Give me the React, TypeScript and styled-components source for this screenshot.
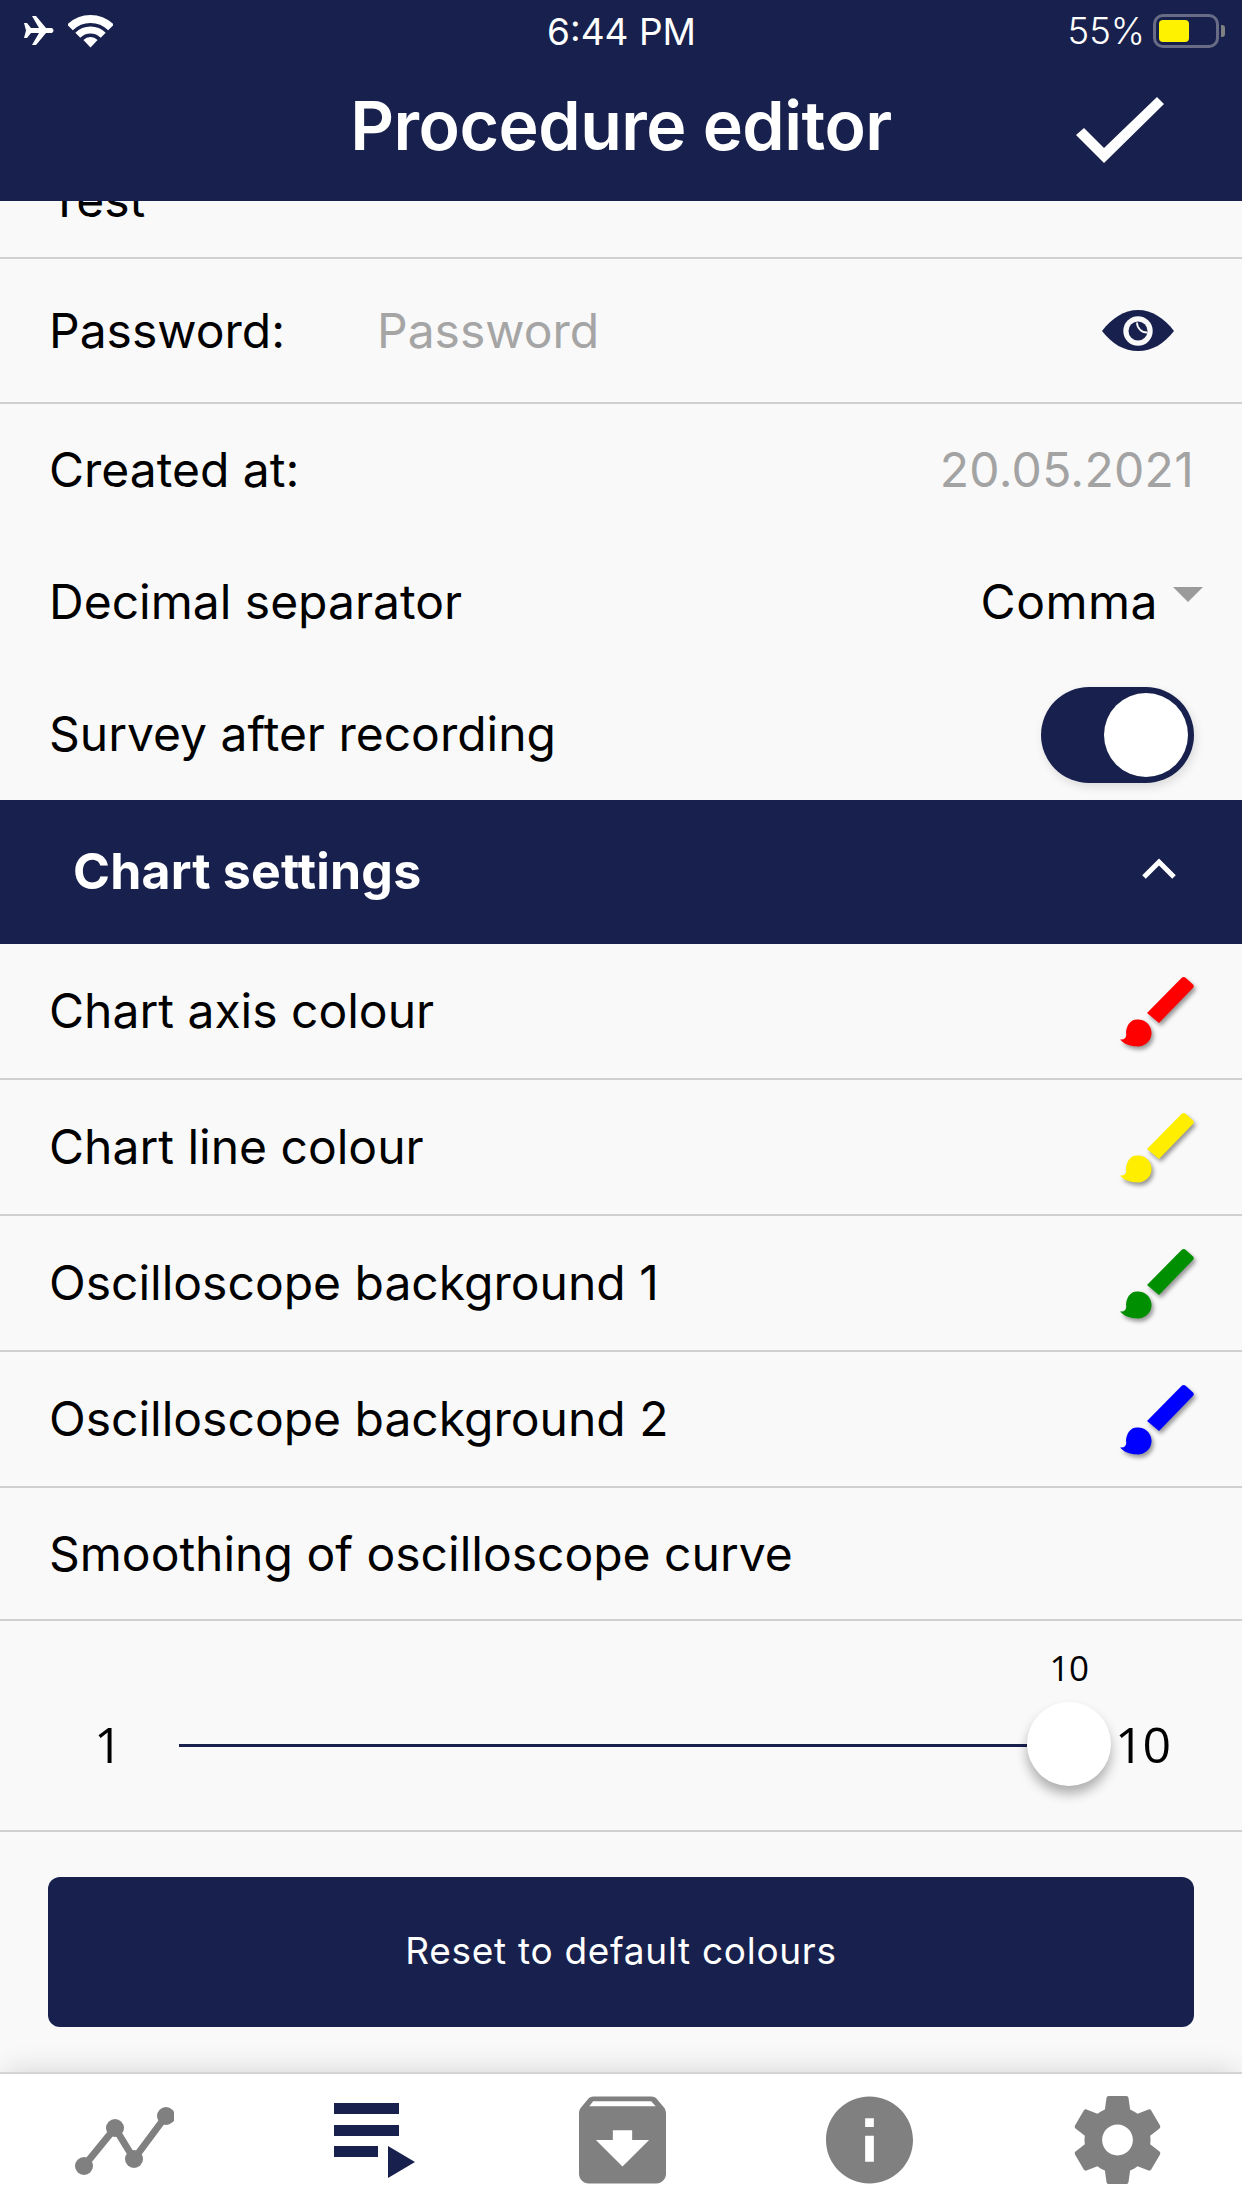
import React from "react";
import styled, { createGlobalStyle } from "styled-components";

const NAVY = "#18214d";
const GRAY = "#808080";

const Global = createGlobalStyle`
  html, body { margin: 0; padding: 0; background: #f9f9f9; }
  * { box-sizing: border-box; }
`;

const Page = styled.div`
  width: 1242px;
  height: 2208px;
  display: flex;
  flex-direction: column;
  overflow: hidden;
  background: #f9f9f9;
  color: #000;
  font-family: Inter, "Liberation Sans", sans-serif;
  font-size: 48px;
`;

const Header = styled.header`
  height: 201px;
  flex: none;
  background: ${NAVY};
  color: #fff;
  display: flex;
  flex-direction: column;
`;

const StatusBar = styled.div`
  height: 62px;
  display: grid;
  grid-template-columns: 1fr auto 1fr;
  align-items: center;
  padding: 0 23px 0 24px;
  font-size: 37px;
`;

const StatusLeft = styled.div`
  display: flex;
  align-items: center;
  gap: 13px;
`;

const StatusRight = styled.div`
  display: flex;
  align-items: center;
  justify-content: flex-end;
  gap: 8px;
  font-weight: 300;
  font-size: 36.5px;
`;

const Battery = styled.div`
  width: 66px;
  height: 34px;
  border: 3px solid #686c86;
  border-radius: 10px;
  padding: 3px;
  position: relative;
  &::after {
    content: "";
    position: absolute;
    right: -9px;
    top: 8px;
    width: 4px;
    height: 12px;
    background: #808080;
    border-radius: 0 3px 3px 0;
  }
`;

const BatteryLevel = styled.div`
  width: 30px;
  height: 22px;
  background: #fff200;
  border-radius: 4px;
`;

const TitleBar = styled.div`
  flex: 1;
  display: grid;
  grid-template-columns: 1fr auto 1fr;
  align-items: center;
  padding: 0 78px 14px 0;
`;

const Title = styled.h1`
  margin: 0 -78px 0 0;
  grid-column: 2;
  font-size: 68px;
  font-weight: 600;
  letter-spacing: -0.5px;
`;

const Done = styled.div`
  grid-column: 3;
  justify-self: end;
  display: flex;
  margin-top: 11px;
`;

const Row = styled.div<{ $h: number; $line?: boolean }>`
  height: ${(p) => p.$h}px;
  flex: none;
  display: flex;
  align-items: center;
  justify-content: space-between;
  padding: 0 48px 0 49px;
  border-bottom: ${(p) => (p.$line ? "2px solid #d0d0d0" : "none")};
`;

const ClippedRow = styled(Row)`
  overflow: hidden;
  align-items: flex-start;
`;

const ClippedText = styled.span`
  margin-top: -30px;
  line-height: 58px;
`;

const Label = styled.span<{ $lift?: number }>`
  white-space: nowrap;
  margin-bottom: ${(p) => p.$lift ?? 2}px;
`;

const Placeholder = styled.span`
  color: #a5a5a5;
  margin-left: 92px;
  flex: 1;
`;

const EyeSlot = styled.div`
  display: flex;
  margin-right: 20px;
`;

const MutedValue = styled.span`
  color: #a3a3a3;
  letter-spacing: 0.3px;
  margin-bottom: 2px;
`;

const SelectValue = styled.div`
  display: flex;
  align-items: center;
  gap: 15px;
  margin: 0 -9px 2px 0;
  letter-spacing: 0.5px;
`;

const Caret = styled.span`
  width: 0;
  height: 0;
  border-left: 15px solid transparent;
  border-right: 15px solid transparent;
  border-top: 15px solid #9b9b9b;
  margin-bottom: 14px;
`;

const Toggle = styled.div`
  width: 153px;
  height: 96px;
  margin-top: 2px;
  border-radius: 48px;
  background: ${NAVY};
  display: flex;
  align-items: center;
  justify-content: flex-end;
  padding-right: 6px;
  box-shadow: 2px 4px 10px rgba(0, 0, 0, 0.12);
`;

const ToggleKnob = styled.div`
  width: 84px;
  height: 84px;
  border-radius: 50%;
  background: #fff;
`;

const SectionHeader = styled.div`
  height: 144px;
  flex: none;
  background: ${NAVY};
  color: #fff;
  display: flex;
  align-items: center;
  justify-content: space-between;
  padding: 0 66px 2px 73px;
  font-size: 50px;
  font-weight: 700;
  letter-spacing: 0.2px;
`;

const ChevronSlot = styled.div`
  display: flex;
  margin-bottom: 6px;
`;

const Brush = styled.svg`
  filter: drop-shadow(2px 3px 2px rgba(0, 0, 0, 0.4));
  overflow: visible;
`;

const SliderRow = styled.div`
  height: 211px;
  flex: none;
  border-bottom: 2px solid #d0d0d0;
  display: flex;
  align-items: center;
  padding: 36px 0 0 94px;
  font-family: "Open Sans", sans-serif;
  font-size: 50px;
  letter-spacing: -1px;
`;

const SliderEnd = styled.span`
  width: 26px;
`;

const Track = styled.div`
  width: 848px;
  height: 3px;
  margin: 3px 0 0 59px;
  background: ${NAVY};
`;

const Thumb = styled.div`
  width: 84px;
  height: 84px;
  flex: none;
  border-radius: 50%;
  background: #fff;
  box-shadow: 0 8px 12px rgba(0, 0, 0, 0.3);
  position: relative;
  margin-right: 4px;
`;

const ThumbValue = styled.span`
  position: absolute;
  left: 0;
  right: 0;
  top: -58px;
  text-align: center;
  font-size: 35px;
  letter-spacing: -0.5px;
`;

const Footer = styled.div`
  flex: 1;
  padding: 45px 48px 0;
`;

const ResetButton = styled.div`
  height: 150px;
  border-radius: 12px;
  background: ${NAVY};
  color: #fff;
  font-size: 37px;
  letter-spacing: 0.7px;
  display: flex;
  align-items: center;
  justify-content: center;
  padding-bottom: 4px;
`;

const TabBar = styled.nav`
  height: 136px;
  flex: none;
  background: #fff;
  border-top: 2px solid #d4d4d4;
  display: grid;
  grid-template-columns: repeat(5, 1fr);
  box-shadow: 0 -8px 26px -6px rgba(0, 0, 0, 0.14);
  position: relative;
`;

const Tab = styled.div<{ $nudge?: number }>`
  display: flex;
  justify-content: center;
  align-items: flex-start;
  padding-top: 22px;
  padding-left: ${(p) => p.$nudge ?? 0}px;
`;

const BrushIcon = ({ color }: { color: string }) => (
  <Brush width="74" height="70" viewBox="0 0 74 70">
    <g fill={color}>
      <path d="M62 1.5a3 3 0 0 1 3.6.2l7.2 6.6a2.6 2.6 0 0 1 .1 3.6L39 47 27 37z" />
      <path d="M17 43.5a13.5 13.5 0 1 1 -1 26.8C10 70.3 4 68 0 63.5c5 .5 7-2 6-7C6.500 50 10 43.5 17 43.5z" />
    </g>
  </Brush>
);

const Plane = () => (
  <svg width="31" height="30" viewBox="0 0 31 30">
    <path
      fill="#fff"
      d="M0 7h3l4 5h8L8 0h4l10 12h6q3 2.500 0 5h-6L12 29H8l7-12H7l-4 5H0l2-7.500z"
    />
  </svg>
);

const Wifi = () => (
  <svg width="45" height="34" viewBox="0 0 45 34">
    <g fill="none" stroke="#fff">
      <path strokeWidth="8" d="M2 13.500A29 29 0 0 1 43 13.500" />
      <path strokeWidth="7" d="M9.800 21.300A18 18 0 0 1 35.200 21.300" />
    </g>
    <path fill="#fff" d="M15.400 26A10 10 0 0 1 29.600 26L22.500 33.500z" />
  </svg>
);

const Eye = () => (
  <svg width="72" height="41" viewBox="0 0 72 41">
    <path
      fill={NAVY}
      d="M0 21C10 8 22 0 36 0s26 8 36 21C62 34 50 41 36 41S10 34 0 21z"
    />
    <circle cx="36" cy="21" r="14.700" fill="#f9f9f9" />
    <circle cx="36" cy="21" r="9.500" fill={NAVY} />
    <path
      d="M35 12.500A10 10 0 0 0 45 22.500"
      fill="none"
      stroke="#f9f9f9"
      strokeWidth="1.800"
    />
  </svg>
);

const Check = () => (
  <svg width="88" height="66" viewBox="0 0 88 66">
    <path fill="#fff" d="M0 38l8-7 20 20L81 0l7 7-60 59z" />
  </svg>
);

const Chevron = () => (
  <svg width="34" height="21" viewBox="0 0 34 21">
    <path fill="none" stroke="#fff" strokeWidth="5" d="M2 19L17 4l15 15" />
  </svg>
);

const ChartIcon = () => (
  <svg width="100" height="88" viewBox="0 1 100 88">
    <path
      fill="none"
      stroke={GRAY}
      strokeWidth="7"
      d="M10 71L41 33l19 31L92 21"
    />
    <g fill={GRAY}>
      <circle cx="10" cy="71" r="9" />
      <circle cx="41" cy="33" r="9" />
      <circle cx="60" cy="64" r="9" />
      <circle cx="92" cy="21" r="9" />
    </g>
  </svg>
);

const ListIcon = () => (
  <svg width="81" height="88" viewBox="0 1 81 88">
    <g fill={NAVY}>
      <rect x="0" y="8" width="65" height="11" />
      <rect x="0" y="30" width="65" height="11" />
      <rect x="0" y="51" width="44" height="11" />
      <path d="M54 51v32l27-16z" />
    </g>
  </svg>
);

const ArchiveIcon = () => (
  <svg width="87" height="88" viewBox="3 3 18 18">
    <path
      fill={GRAY}
      d="M20.54 5.230l-1.390-1.680C18.880 3.210 18.470 3 18 3H6c-.47 0-.88.21-1.160.55L3.460 5.230C3.170 5.570 3 6.020 3 6.500V19c0 1.100.9 2 2 2h14c1.100 0 2-.9 2-2V6.500c0-.48-.17-.93-.46-1.270zM12 17.500L6.500 12H10v-2h4v2h3.500L12 17.500zM5.120 5l.81-1h12l.94 1H5.120z"
    />
  </svg>
);

const InfoIcon = () => (
  <svg width="87" height="88" viewBox="2 2 20 20">
    <path
      fill={GRAY}
      d="M12 2C6.480 2 2 6.480 2 12s4.480 10 10 10 10-4.480 10-10S17.520 2 12 2zm1 15h-2v-6h2v6zm0-8h-2V7h2v2z"
    />
  </svg>
);

const GearIcon = () => (
  <svg width="89" height="88" viewBox="2.400 2 19.200 20">
    <path
      fill={GRAY}
      d="M19.430 12.980c.04-.32.07-.64.07-.98s-.03-.66-.07-.98l2.110-1.650c.19-.15.24-.42.12-.64l-2-3.460c-.12-.22-.39-.3-.61-.22l-2.490 1c-.52-.4-1.080-.73-1.690-.98l-.38-2.650C14.460 2.180 14.250 2 14 2h-4c-.25 0-.46.18-.49.42l-.38 2.650c-.61.25-1.170.59-1.690.98l-2.490-1c-.23-.09-.49 0-.61.22l-2 3.460c-.13.22-.07.49.12.64l2.110 1.650c-.04.32-.07.65-.07.98s.03.66.07.98l-2.110 1.650c-.19.15-.24.42-.12.64l2 3.460c.12.22.39.3.61.22l2.490-1c.52.4 1.080.73 1.690.98l.38 2.650c.03.24.24.42.49.42h4c.25 0 .46-.18.49-.42l.38-2.650c.61-.25 1.170-.59 1.690-.98l2.490 1c.23.09.49 0 .61-.22l2-3.460c.12-.22.07-.49-.12-.64l-2.110-1.650zM12 15.500c-1.930 0-3.500-1.570-3.500-3.500s1.570-3.500 3.500-3.500 3.500 1.570 3.500 3.500-1.570 3.500-3.500 3.500z"
    />
  </svg>
);

const colours = [
  { label: "Chart axis colour", color: "#ff0000" },
  { label: "Chart line colour", color: "#ffee00" },
  { label: "Oscilloscope background 1", color: "#008f00" },
  { label: "Oscilloscope background 2", color: "#0000ff" },
];

export default function App() {
  return (
    <Page>
      <Global />
      <Header>
        <StatusBar>
          <StatusLeft>
            <Plane />
            <Wifi />
          </StatusLeft>
          <span>6:44 PM</span>
          <StatusRight>
            <span>55%</span>
            <Battery>
              <BatteryLevel />
            </Battery>
          </StatusRight>
        </StatusBar>
        <TitleBar>
          <Title>Procedure editor</Title>
          <Done>
            <Check />
          </Done>
        </TitleBar>
      </Header>

      <ClippedRow $h={58} $line>
        <ClippedText>Test</ClippedText>
      </ClippedRow>
      <Row $h={145} $line>
        <Label $lift={0}>Password:</Label>
        <Placeholder>Password</Placeholder>
        <EyeSlot>
          <Eye />
        </EyeSlot>
      </Row>
      <Row $h={133}>
        <Label>Created at:</Label>
        <MutedValue>20.05.2021</MutedValue>
      </Row>
      <Row $h={131}>
        <Label>Decimal separator</Label>
        <SelectValue>
          <span>Comma</span>
          <Caret />
        </SelectValue>
      </Row>
      <Row $h={132}>
        <Label>Survey after recording</Label>
        <Toggle>
          <ToggleKnob />
        </Toggle>
      </Row>

      <SectionHeader>
        <span>Chart settings</span>
        <ChevronSlot>
          <Chevron />
        </ChevronSlot>
      </SectionHeader>

      {colours.map((c) => (
        <Row key={c.label} $h={136} $line>
          <Label>{c.label}</Label>
          <BrushIcon color={c.color} />
        </Row>
      ))}
      <Row $h={133} $line>
        <Label $lift={0}>Smoothing of oscilloscope curve</Label>
      </Row>

      <SliderRow>
        <SliderEnd>1</SliderEnd>
        <Track />
        <Thumb>
          <ThumbValue>10</ThumbValue>
        </Thumb>
        <span>10</span>
      </SliderRow>

      <Footer>
        <ResetButton>Reset to default colours</ResetButton>
      </Footer>

      <TabBar>
        <Tab>
          <ChartIcon />
        </Tab>
        <Tab $nudge={3}>
          <ListIcon />
        </Tab>
        <Tab $nudge={4}>
          <ArchiveIcon />
        </Tab>
        <Tab>
          <InfoIcon />
        </Tab>
        <Tab>
          <GearIcon />
        </Tab>
      </TabBar>
    </Page>
  );
}
